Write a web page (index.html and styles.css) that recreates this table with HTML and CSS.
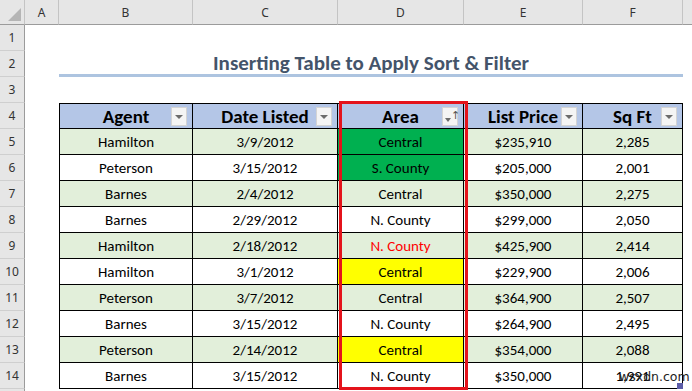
FILE: index.html
```html
<!DOCTYPE html>
<html>
<head>
<meta charset="utf-8">
<link rel="stylesheet" href="styles.css">
</head>
<body>
<div class="sheet">
  <div class="corner"><span class="tri"></span></div>
  <div class="ch">A</div><div class="ch">B</div><div class="ch">C</div><div class="ch">D</div><div class="ch">E</div><div class="ch">F</div><div class="ch edge"></div>

  <div class="rh">1</div><div class="blank"></div>
  <div class="rh">2</div><div class="cell"></div><div class="title">Inserting Table to Apply Sort &amp; Filter</div><div class="cell"></div>
  <div class="rh">3</div><div class="blank"></div>

  <div class="rh">4</div><div class="cell"></div>
  <div class="th first">Agent<span class="fb"><span class="dd"></span></span></div>
  <div class="th">Date Listed<span class="fb"><span class="dd"></span></span></div>
  <div class="th">Area<span class="fb sort"><span class="dd"></span><span class="up">↑</span></span></div>
  <div class="th">List Price<span class="fb"><span class="dd"></span></span></div>
  <div class="th">Sq Ft<span class="fb"><span class="dd"></span></span></div>
  <div class="cell"></div>

  <div class="rh">5</div><div class="cell"></div>
  <div class="td first band">Hamilton</div><div class="td band">3/9/2012</div><div class="td green">Central</div><div class="td band">$235,910</div><div class="td band">2,285</div><div class="cell"></div>

  <div class="rh">6</div><div class="cell"></div>
  <div class="td first">Peterson</div><div class="td">3/15/2012</div><div class="td green">S. County</div><div class="td">$205,000</div><div class="td">2,001</div><div class="cell"></div>

  <div class="rh">7</div><div class="cell"></div>
  <div class="td first band">Barnes</div><div class="td band">2/4/2012</div><div class="td band">Central</div><div class="td band">$350,000</div><div class="td band">2,275</div><div class="cell"></div>

  <div class="rh">8</div><div class="cell"></div>
  <div class="td first">Barnes</div><div class="td">2/29/2012</div><div class="td">N. County</div><div class="td">$299,000</div><div class="td">2,050</div><div class="cell"></div>

  <div class="rh">9</div><div class="cell"></div>
  <div class="td first band">Hamilton</div><div class="td band">2/18/2012</div><div class="td band red">N. County</div><div class="td band">$425,900</div><div class="td band">2,414</div><div class="cell"></div>

  <div class="rh">10</div><div class="cell"></div>
  <div class="td first">Hamilton</div><div class="td">3/1/2012</div><div class="td yellow">Central</div><div class="td">$229,900</div><div class="td">2,006</div><div class="cell"></div>

  <div class="rh">11</div><div class="cell"></div>
  <div class="td first band">Peterson</div><div class="td band">3/7/2012</div><div class="td band">Central</div><div class="td band">$364,900</div><div class="td band">2,507</div><div class="cell"></div>

  <div class="rh">12</div><div class="cell"></div>
  <div class="td first">Barnes</div><div class="td">3/15/2012</div><div class="td">N. County</div><div class="td">$264,900</div><div class="td">2,495</div><div class="cell"></div>

  <div class="rh">13</div><div class="cell"></div>
  <div class="td first band">Peterson</div><div class="td band">2/14/2012</div><div class="td yellow">Central</div><div class="td band">$354,000</div><div class="td band">2,088</div><div class="cell"></div>

  <div class="rh">14</div><div class="cell"></div>
  <div class="td first">Barnes</div><div class="td">3/15/2012</div><div class="td">N. County</div><div class="td">$350,000</div><div class="td">1,991</div><div class="cell"></div>

  <div class="rh rest"></div><div class="blank"></div>

  <div class="highlight"></div>
  <div class="handle"></div>
  <div class="watermark">wsxdn.com</div>
</div>
</body>
</html>
```
FILE: styles.css
```css
* { box-sizing: border-box; }
html, body { margin: 0; padding: 0; background: #fff; }
body { width: 692px; height: 391px; overflow: hidden; }

.sheet {
  position: relative;
  display: grid;
  grid-template-columns: 25px 34px 134px 145px 126px 119px 100px 1fr;
  grid-template-rows: 25px repeat(14, 26px) 1fr;
  width: 692px;
  height: 391px;
  font-family: Carlito, Calibri, Lato, "Liberation Sans", sans-serif;
  color: #000;
}

.corner {
  position: relative;
  background: #e6e6e6;
  border-right: 1px solid #c4c4c4;
  border-bottom: 1px solid #9b9b9b;
}
.corner .tri {
  position: absolute;
  right: 3px;
  bottom: 3px;
  width: 0;
  height: 0;
  border-left: 13px solid transparent;
  border-bottom: 13px solid #b5b5b5;
}

.ch {
  display: flex;
  align-items: center;
  justify-content: center;
  background: #e6e6e6;
  border-right: 1px solid #c4c4c4;
  border-bottom: 1px solid #9b9b9b;
  font-family: "Noto Sans", "Open Sans", sans-serif;
  font-size: 12px;
  color: #333;
  padding-top: 1px;
}
.ch.edge { border-right: none; }

.rh {
  display: flex;
  align-items: center;
  justify-content: center;
  background: #e6e6e6;
  border-right: 1px solid #9b9b9b;
  border-bottom: 1px solid #cfcfcf;
  font-family: "Noto Sans", "Open Sans", sans-serif;
  font-size: 12px;
  color: #333;
}
.rh.rest { border-bottom: none; }

.blank { grid-column: 2 / -1; }

.title {
  grid-column: 3 / 8;
  display: flex;
  align-items: center;
  justify-content: center;
  font-size: 21px;
  font-weight: bold;
  color: #44546a;
  border-bottom: 3px solid #adc4e0;
  padding-top: 1px;
}

.th, .td {
  position: relative;
  display: flex;
  align-items: center;
  justify-content: center;
  border-right: 1px solid #000;
  border-bottom: 1px solid #000;
  white-space: nowrap;
}
.th {
  background: #b4c6e7;
  border-top: 1px solid #000;
  font-weight: bold;
  font-size: 19px;
}
.td { font-size: 15px; padding-top: 1px; }
.first { border-left: 1px solid #000; }
.band { background: #e2efda; }
.green { background: #00b050; }
.yellow { background: #ffff00; }
.red { color: #ff0000; }

.fb {
  position: absolute;
  right: 5px;
  top: 3px;
  width: 16px;
  height: 19px;
  background: #f4f4f4;
  border: 1px solid #d4d4d4;
  display: flex;
  align-items: center;
  justify-content: center;
}
.fb .dd {
  width: 0;
  height: 0;
  border-left: 4px solid transparent;
  border-right: 4px solid transparent;
  border-top: 4px solid #6b6b6b;
  margin-top: 1px;
}
.fb.sort { justify-content: flex-start; padding-left: 2px; }
.fb.sort .dd { margin-top: 7px; border-left-width: 3.5px; border-right-width: 3.5px; }
.fb.sort .up {
  font-family: "DejaVu Sans", sans-serif;
  font-size: 11px;
  font-weight: normal;
  color: #555;
  line-height: 1;
  margin-top: -3px;
}

.highlight {
  position: absolute;
  left: 339px;
  top: 101px;
  width: 129px;
  height: 289px;
  border: 3px solid #e4131b;
  pointer-events: none;
}

.handle {
  position: absolute;
  left: 677px;
  top: 383px;
  width: 6px;
  height: 6px;
  background: #5c5ca8;
}

.watermark {
  position: absolute;
  left: 619px;
  top: 369px;
  font-family: "DejaVu Sans", sans-serif;
  font-size: 12.5px;
  color: #222;
}
```
